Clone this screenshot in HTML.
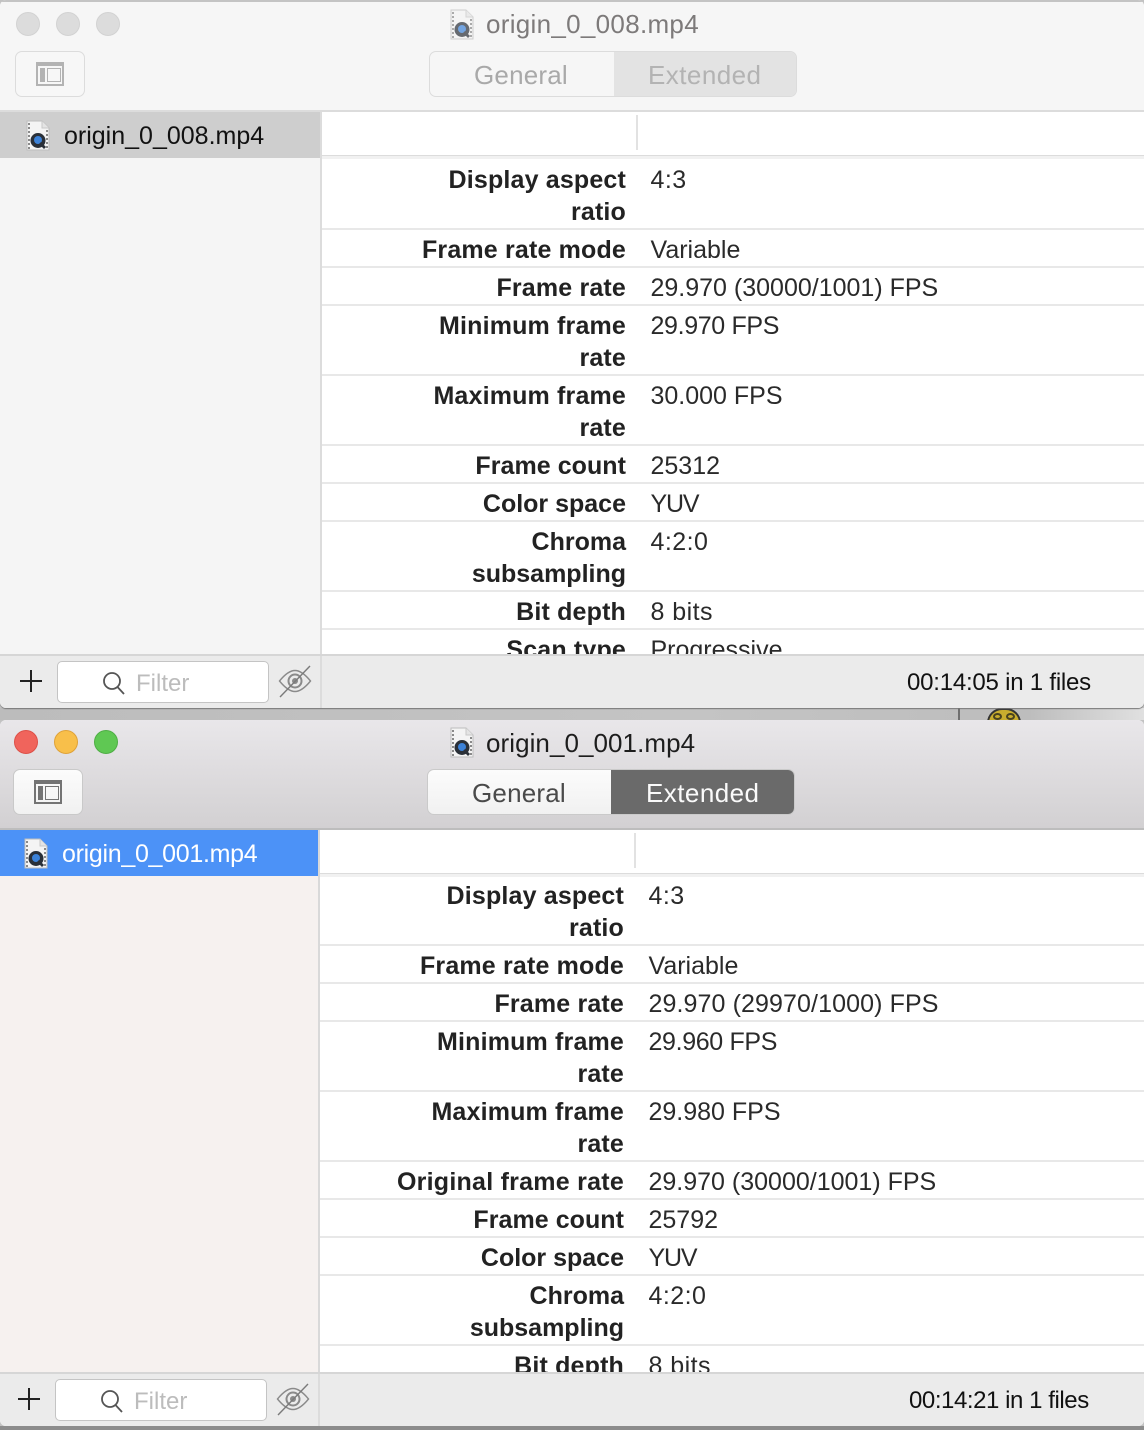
<!DOCTYPE html>
<html><head><meta charset="utf-8">
<style>
html,body{margin:0;padding:0;width:1144px;height:1430px;overflow:hidden;background:#c2c2c2}
*{box-sizing:border-box}
body{position:relative;font-family:"Liberation Sans",sans-serif;font-size:25px;color:#222}
.a{position:absolute}
.t{position:absolute;white-space:nowrap;line-height:32px}
.l{position:absolute;white-space:nowrap;line-height:32px;font-weight:bold;text-align:right;color:#222;letter-spacing:.17px}
.w1 .l{left:322px;width:304px}
.w1 .v{position:absolute;left:650.500px;line-height:32px;white-space:nowrap;color:#2a2a2a}
.w2 .l{left:320px;width:304px}
.w2 .v{position:absolute;left:648.500px;line-height:32px;white-space:nowrap;color:#2a2a2a}
.h{position:absolute;height:2px;background:#e8e8e8}
.w1 .h{left:322px;right:0}
.w2 .h{left:320px;right:0}
.fps{letter-spacing:-.35px}
.yuv{letter-spacing:-1.200px}
.wide{letter-spacing:.45px}
</style></head><body>
<svg width="0" height="0" style="position:absolute">
<symbol id="file" viewBox="0 0 24 31">
<path d="M1 1H16L23 8V30H1Z" fill="#f4f4f4" stroke="#bdbdbd" stroke-width="1"/>
<path d="M16 1V8H23" fill="#e4e4e4" stroke="#c8c8c8" stroke-width="1"/>
<path d="M3 3V29M21 10V29" stroke="#8a8a8a" stroke-width="2" stroke-dasharray="2 2" fill="none"/>
<circle cx="12" cy="20.500" r="7.500" fill="#2a3038"/>
<circle cx="12" cy="20" r="4" fill="#3c82d8"/>
<path d="M14 23L19 28" stroke="#2a3038" stroke-width="2.800"/>
</symbol>
<symbol id="eye" viewBox="0 0 34 34">
<path d="M1.500 17C8 9 13 6.500 17 6.500S26 9 32.500 17C26 25 21 27.500 17 27.500S8 25 1.500 17Z" fill="none" stroke="#8a8a8a" stroke-width="1.400"/>
<circle cx="17" cy="17" r="6.500" fill="none" stroke="#8a8a8a" stroke-width="2"/>
<circle cx="17" cy="17" r="3" fill="#8a8a8a"/>
<path d="M2 33L32 2" stroke="#7a7a7a" stroke-width="1.400"/>
</symbol>
<symbol id="side" viewBox="0 0 28 24">
<path d="M0 0H28V24H0ZM2 4V22H26V4Z" fill="currentColor" fill-rule="evenodd"/>
<rect x="4" y="6" width="5" height="14" fill="currentColor"/>
<rect x="11.500" y="6.500" width="13" height="13" fill="none" stroke="currentColor" stroke-width="1"/>
</symbol>
</svg>

<!-- background bits -->
<div class="a" style="left:0;top:708px;width:1144px;height:12px;background:linear-gradient(90deg,#bcbcbc,#c4c4c4 60%,#bdbdbd 90%,#e0e0e0)"></div>
<div class="a" style="left:958px;top:706px;width:2px;height:16px;background:#6f6f6f"></div>
<div class="a" style="left:987px;top:708px;width:34px;height:30px;border-radius:17px;background:#c9ad2e;border:2px solid #333"></div>
<div class="a" style="left:993px;top:713px;width:9px;height:7px;border-radius:50%;border:2px solid #4a4320"></div>
<div class="a" style="left:1006px;top:713px;width:9px;height:7px;border-radius:50%;border:2px solid #4a4320"></div>
<div class="a" style="left:0;top:1426px;width:1144px;height:4px;background:#8c8c8c"></div>

<!-- WINDOW 1 -->
<div class="a w1" style="left:0;top:0;width:1144px;height:708px;background:#fff;border-radius:6px;overflow:hidden;box-shadow:0 1px 1px #777">
<div class="a" style="left:0;top:0;width:1144px;height:2px;background:#c4c4c4"></div>
<div class="a" style="left:0;top:2px;width:1144px;height:109px;background:#f6f6f6"></div>
<div class="a" style="left:0;top:110px;width:1144px;height:2px;background:#dcdcdc"></div>
<div class="a" style="left:16px;top:12px;width:24px;height:24px;border-radius:50%;background:#dcdcdc;border:1px solid #d2d2d2"></div>
<div class="a" style="left:56px;top:12px;width:24px;height:24px;border-radius:50%;background:#dcdcdc;border:1px solid #d2d2d2"></div>
<div class="a" style="left:96px;top:12px;width:24px;height:24px;border-radius:50%;background:#dcdcdc;border:1px solid #d2d2d2"></div>
<div class="a" style="left:15px;top:51px;width:70px;height:46px;border-radius:7px;background:#f7f7f7;border:1px solid #dcdcdc"></div>
<svg class="a" style="left:36px;top:62px;color:#b3b3b3" width="28" height="24"><use href="#side"/></svg>
<svg class="a" style="left:450px;top:9px;opacity:.7" width="24" height="31"><use href="#file"/></svg>
<div class="t" style="left:486px;top:8px;font-size:26px;letter-spacing:.3px;color:#7d7a7a">origin_0_008.mp4</div>
<div class="a" style="left:429px;top:51px;width:368px;height:46px;border-radius:7px;background:#f6f6f6;border:1px solid #dcdcdc;overflow:hidden"><div class="a" style="left:184px;top:0;width:184px;height:46px;background:#e3e3e3"></div></div>
<div class="t" style="left:474px;top:59px;font-size:26px;letter-spacing:.2px;color:#a9a9a9">General</div>
<div class="t" style="left:648px;top:59px;font-size:26px;letter-spacing:.45px;color:#b3b3b3">Extended</div>

<div class="a" style="left:0;top:112px;width:321px;height:543px;background:#f5f5f5"></div>
<div class="a" style="left:0;top:112px;width:321px;height:46px;background:#cecece"></div>
<div class="a" style="left:320px;top:112px;width:2px;height:543px;background:#dcdcdc"></div>
<svg class="a" style="left:26px;top:120px" width="24" height="31"><use href="#file"/></svg>
<div class="t" style="left:64px;top:120px;color:#111">origin_0_008.mp4</div>

<div class="a" style="left:636px;top:115px;width:2px;height:35px;background:#e2e2e2"></div>
<div class="a" style="left:322px;top:155px;right:0;height:1px;background:#dcdcdc"></div>
<div class="a" style="left:322px;top:156px;right:0;height:3px;background:#f1f1f1"></div>

<div class="l" style="top:164px">Display aspect<br>ratio</div><div class="v wide" style="top:164px">4:3</div>
<div class="h" style="top:228px"></div>
<div class="l" style="top:234px">Frame rate mode</div><div class="v" style="top:234px">Variable</div>
<div class="h" style="top:266px"></div>
<div class="l" style="top:272px">Frame rate</div><div class="v" style="top:272px">29.970 (30000/1001) FPS</div>
<div class="h" style="top:304px"></div>
<div class="l" style="top:310px">Minimum frame<br>rate</div><div class="v fps" style="top:310px">29.970 FPS</div>
<div class="h" style="top:374px"></div>
<div class="l" style="top:380px">Maximum frame<br>rate</div><div class="v" style="top:380px">30.000 FPS</div>
<div class="h" style="top:444px"></div>
<div class="l" style="top:450px;letter-spacing:.05px">Frame count</div><div class="v" style="top:450px">25312</div>
<div class="h" style="top:482px"></div>
<div class="l" style="top:488px;letter-spacing:0">Color space</div><div class="v yuv" style="top:488px">YUV</div>
<div class="h" style="top:520px"></div>
<div class="l" style="top:526px;letter-spacing:0">Chroma<br>subsampling</div><div class="v wide" style="top:526px">4:2:0</div>
<div class="h" style="top:590px"></div>
<div class="l" style="top:596px">Bit depth</div><div class="v wide" style="top:596px">8 bits</div>
<div class="h" style="top:628px"></div>
<div class="l" style="top:634px">Scan type</div><div class="v" style="top:634px">Progressive</div>

<div class="a" style="left:0;top:654px;width:1144px;height:54px;background:#ebebeb;border-top:2px solid #d6d6d6"></div>
<div class="a" style="left:320px;top:656px;width:2px;height:52px;background:#dcdcdc"></div>
<div class="a" style="left:20px;top:680px;width:22px;height:2px;background:#222"></div>
<div class="a" style="left:30px;top:670px;width:2px;height:22px;background:#222"></div>
<div class="a" style="left:57px;top:661px;width:212px;height:42px;background:#fff;border:1px solid #c4c4c4;border-radius:5px"></div>
<svg class="a" style="left:101px;top:671px" width="24" height="24" fill="none" stroke="#555" stroke-width="1.800"><circle cx="11" cy="10" r="8"/><path d="M16.500 16L23 23"/></svg>
<div class="t" style="left:136px;top:668px;font-size:24px;color:#bcbcbc">Filter</div>
<svg class="a" style="left:278px;top:664px" width="34" height="34"><use href="#eye"/></svg>
<div class="t" style="left:907px;top:667px;font-size:24px;letter-spacing:-.22px;color:#111">00:14:05 in 1 files</div>
</div>

<!-- WINDOW 2 -->
<div class="a" style="left:0;top:720px;width:1144px;height:706px;background:#fff;border-radius:6px;overflow:hidden"></div>
<div class="w2">
<div class="a" style="left:0;top:720px;width:1144px;height:109px;background:linear-gradient(#e9e7ea,#d2d0d2);border-radius:6px 6px 0 0"></div>
<div class="a" style="left:0;top:828px;width:1144px;height:2px;background:#bdbdbd"></div>
<div class="a" style="left:14px;top:730px;width:24px;height:24px;border-radius:50%;background:#f0645c;border:1px solid #dd5048"></div>
<div class="a" style="left:54px;top:730px;width:24px;height:24px;border-radius:50%;background:#f8bf4a;border:1px solid #dfa238"></div>
<div class="a" style="left:94px;top:730px;width:24px;height:24px;border-radius:50%;background:#5fc853;border:1px solid #4fae45"></div>
<div class="a" style="left:13px;top:769px;width:70px;height:46px;border-radius:7px;background:linear-gradient(#fcfcfc,#f1f1f1);border:1px solid #c9c9c9"></div>
<svg class="a" style="left:34px;top:780px;color:#747474" width="28" height="24"><use href="#side"/></svg>
<svg class="a" style="left:450px;top:727px" width="24" height="31"><use href="#file"/></svg>
<div class="t" style="left:486px;top:727px;font-size:26px;letter-spacing:.06px;color:#1d1d1d">origin_0_001.mp4</div>
<div class="a" style="left:427px;top:769px;width:368px;height:46px;border-radius:7px;background:linear-gradient(#fcfcfc,#f1f1f1);border:1px solid #cacaca;overflow:hidden"><div class="a" style="left:183px;top:-1px;width:185px;height:48px;background:#6a6a6a"></div></div>
<div class="t" style="left:472px;top:777px;font-size:26px;letter-spacing:.2px;color:#4a4a4a">General</div>
<div class="t" style="left:646px;top:777px;font-size:26px;letter-spacing:.45px;color:#fafafa">Extended</div>

<div class="a" style="left:0;top:830px;width:319px;height:543px;background:#f6f1ef"></div>
<div class="a" style="left:0;top:830px;width:318px;height:46px;background:#4c92f7"></div>
<div class="a" style="left:318px;top:830px;width:2px;height:543px;background:#d9d9d9"></div>
<div class="a" style="left:320px;top:830px;width:824px;height:543px;background:#fff"></div>
<svg class="a" style="left:24px;top:838px" width="24" height="31"><use href="#file"/></svg>
<div class="t" style="left:62px;top:838px;letter-spacing:-.3px;color:#fff">origin_0_001.mp4</div>

<div class="a" style="left:634px;top:833px;width:2px;height:35px;background:#e2e2e2"></div>
<div class="a" style="left:320px;top:873px;right:0;height:1px;background:#dcdcdc"></div>
<div class="a" style="left:320px;top:874px;right:0;height:3px;background:#f1f1f1"></div>

<div class="l" style="top:880px">Display aspect<br>ratio</div><div class="v wide" style="top:880px">4:3</div>
<div class="h" style="top:944px"></div>
<div class="l" style="top:950px">Frame rate mode</div><div class="v" style="top:950px">Variable</div>
<div class="h" style="top:982px"></div>
<div class="l" style="top:988px">Frame rate</div><div class="v" style="top:988px;letter-spacing:.1px">29.970 (29970/1000) FPS</div>
<div class="h" style="top:1020px"></div>
<div class="l" style="top:1026px">Minimum frame<br>rate</div><div class="v fps" style="top:1026px">29.960 FPS</div>
<div class="h" style="top:1090px"></div>
<div class="l" style="top:1096px">Maximum frame<br>rate</div><div class="v" style="top:1096px">29.980 FPS</div>
<div class="h" style="top:1160px"></div>
<div class="l" style="top:1166px;letter-spacing:.25px">Original frame rate</div><div class="v" style="top:1166px">29.970 (30000/1001) FPS</div>
<div class="h" style="top:1198px"></div>
<div class="l" style="top:1204px;letter-spacing:.05px">Frame count</div><div class="v" style="top:1204px">25792</div>
<div class="h" style="top:1236px"></div>
<div class="l" style="top:1242px;letter-spacing:0">Color space</div><div class="v yuv" style="top:1242px">YUV</div>
<div class="h" style="top:1274px"></div>
<div class="l" style="top:1280px;letter-spacing:0">Chroma<br>subsampling</div><div class="v wide" style="top:1280px">4:2:0</div>
<div class="h" style="top:1344px"></div>
<div class="l" style="top:1350px">Bit depth</div><div class="v wide" style="top:1350px">8 bits</div>

<div class="a" style="left:0;top:1372px;width:1144px;height:54px;background:#ebebeb;border-top:2px solid #d6d6d6;border-radius:0 0 6px 6px"></div>
<div class="a" style="left:318px;top:1374px;width:2px;height:52px;background:#dcdcdc"></div>
<div class="a" style="left:18px;top:1398px;width:22px;height:2px;background:#222"></div>
<div class="a" style="left:28px;top:1388px;width:2px;height:22px;background:#222"></div>
<div class="a" style="left:55px;top:1379px;width:212px;height:42px;background:#fff;border:1px solid #c4c4c4;border-radius:5px"></div>
<svg class="a" style="left:99px;top:1389px" width="24" height="24" fill="none" stroke="#555" stroke-width="1.800"><circle cx="11" cy="10" r="8"/><path d="M16.500 16L23 23"/></svg>
<div class="t" style="left:134px;top:1386px;font-size:24px;color:#bcbcbc">Filter</div>
<svg class="a" style="left:276px;top:1382px" width="34" height="34"><use href="#eye"/></svg>
<div class="t" style="left:909px;top:1385px;font-size:24px;letter-spacing:-.44px;color:#111">00:14:21 in 1 files</div>
</div>
</body></html>
